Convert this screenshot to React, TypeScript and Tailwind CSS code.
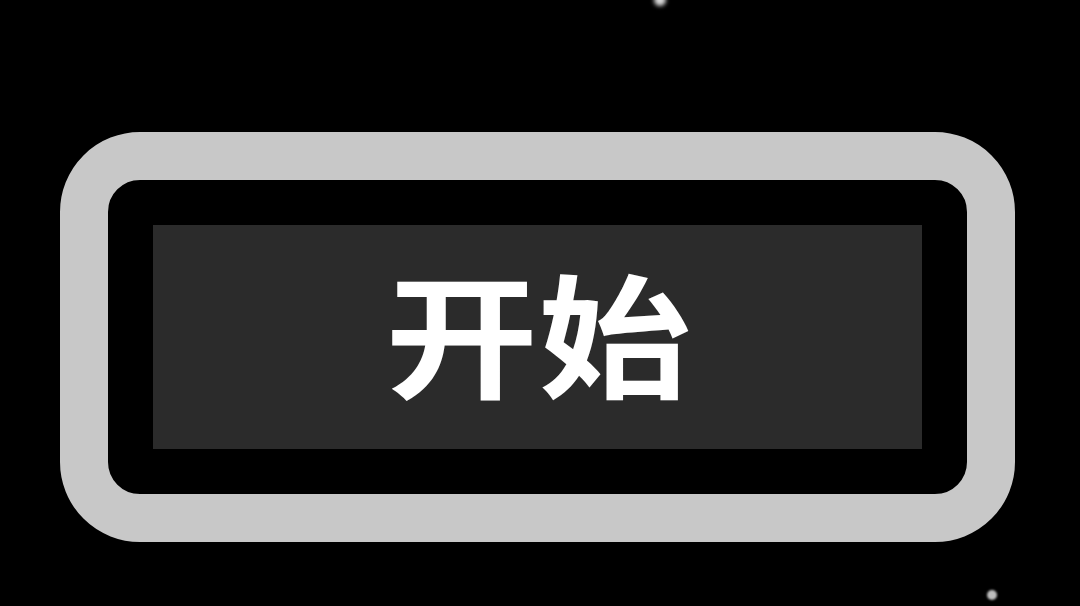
import React from "react";

export default function App() {
  return (
    <div className="relative h-[606px] w-[1080px] overflow-hidden bg-black">
      <div className="absolute left-[654px] top-[-6px] h-[12px] w-[12px] rounded-full bg-[#d8d8d8] blur-[2px]" />
      <div className="absolute left-[987px] top-[590px] h-[10px] w-[10px] rounded-full bg-[#bdbdbd] blur-[1px]" />
      <div className="pl-[60px] pt-[132px]">
        <div className="box-border flex h-[410px] w-[955px] items-center justify-center rounded-[80px] border-[48px] border-[#c8c8c8] bg-black p-[45px] blur-[0.6px]">
          <div className="flex h-full w-full items-center justify-center bg-[#2b2b2b]">
            <span
              className="mb-[14px] ml-[2px] inline-block scale-x-[1.14] text-[134px] font-bold leading-none text-white"
              style={{ fontFamily: '"Noto Sans CJK SC", "Noto Sans", sans-serif' }}
            >
              开始
            </span>
          </div>
        </div>
      </div>
    </div>
  );
}
